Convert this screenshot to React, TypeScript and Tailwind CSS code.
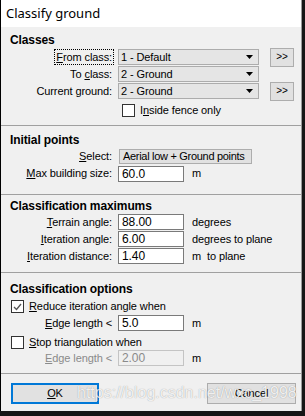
import React from "react";

function U({ children }: { children: React.ReactNode }) {
  return <span className="underline underline-offset-[1px]">{children}</span>;
}

function Arrow() {
  return (
    <svg width="7" height="4" viewBox="0 0 7 4" className="shrink-0">
      <path d="M0 0H7L3.5 4Z" fill="#000" />
    </svg>
  );
}

function Combo({ value }: { value: string }) {
  return (
    <div className="ml-[6px] flex h-[16px] w-[141px] items-center justify-between border border-[#acacac] bg-[#e5e5e5] pl-[2px] pr-[5px]">
      <span>{value}</span>
      <Arrow />
    </div>
  );
}

function MoreBtn() {
  return (
    <div className="ml-[11px] flex h-[19px] w-[24px] shrink-0 items-center justify-center border border-[#adadad] bg-[#e1e1e1] text-[10px]">
      &gt;&gt;
    </div>
  );
}

function Field({ value, disabled }: { value: string; disabled?: boolean }) {
  return (
    <div
      className={`flex h-[16px] w-[66px] items-center border pl-[3px] text-[12px] ${
        disabled ? "border-[#c4c4c4] bg-[#f0f0f0] text-[#8a8a8a]" : "border-[#7a7a7a] bg-white"
      }`}
    >
      {value}
    </div>
  );
}

function Check({ checked }: { checked?: boolean }) {
  return (
    <div className="flex h-[13px] w-[13px] shrink-0 items-center justify-center border border-[#333] bg-white">
      {checked && (
        <svg width="9" height="8" viewBox="0 0 9 8">
          <path d="M1 4L3.5 6.5L8 1" stroke="#555" strokeWidth="1.3" fill="none" />
        </svg>
      )}
    </div>
  );
}

function Label({ children, w = "w-[111px]" }: { children: React.ReactNode; w?: string }) {
  return <div className={`${w} shrink-0 whitespace-nowrap text-right`}>{children}</div>;
}

export default function App() {
  return (
    <div className="h-[416px] w-[305px] overflow-hidden bg-[#161616] font-['Liberation_Sans',Arial,sans-serif] text-[11px] leading-none tracking-[-0.1px] text-black">
      <div className="relative h-[411px] w-[302px] border-l border-r border-l-black border-r-[#9a9a9a] bg-[#f0f0f0]">
        <div className="flex h-[27px] items-center bg-white pl-[5px] font-['Noto_Sans',sans-serif] text-[13px] tracking-normal">
          Classify ground
        </div>

        {/* Classes */}
        <div className="pb-[8px] pt-[6px]">
          <div className="pl-[9px] text-[12px] font-bold leading-[14px]">Classes</div>
          <div className="mt-[2px] flex h-[16px] items-center">
            <Label>
              <span className="outline-1 outline-dotted outline-offset-1 outline-black">
                <U>F</U>rom class:
              </span>
            </Label>
            <Combo value="1 - Default" />
            <MoreBtn />
          </div>
          <div className="mt-[1px] flex h-[16px] items-center">
            <Label>
              To <U>c</U>lass:
            </Label>
            <Combo value="2 - Ground" />
          </div>
          <div className="mt-[1px] flex h-[16px] items-center">
            <Label>
              Current <U>g</U>round:
            </Label>
            <Combo value="2 - Ground" />
            <MoreBtn />
          </div>
          <div className="mt-[5px] flex h-[13px] items-center pl-[121px]">
            <Check />
            <span className="ml-[5px]">
              I<U>n</U>side fence only
            </span>
          </div>
        </div>
        <div className="border-t border-[#a0a0a0]" />

        {/* Initial points */}
        <div className="pb-[12px] pt-[7px]">
          <div className="pl-[9px] text-[12px] font-bold leading-[14px]">Initial points</div>
          <div className="mt-[2px] flex h-[15px] items-center">
            <Label>
              <U>S</U>elect:
            </Label>
            <div className="ml-[7px] flex h-[15px] w-[133px] items-center whitespace-nowrap border border-[#adadad] bg-[#e1e1e1] pl-[3px] tracking-[-0.3px]">
              Aerial low + Ground points
            </div>
          </div>
          <div className="mt-[1px] flex h-[17px] items-center">
            <Label>
              <U>M</U>ax building size:
            </Label>
            <div className="ml-[6px]">
              <Field value="60.0" />
            </div>
            <span className="ml-[8px]">m</span>
          </div>
        </div>
        <div className="border-t border-[#a0a0a0]" />

        {/* Classification maximums */}
        <div className="pb-[8px] pt-[4px]">
          <div className="pl-[9px] text-[12px] font-bold leading-[14px]">Classification maximums</div>
          <div className="mt-[1px] flex flex-col gap-[1px]">
            <div className="flex h-[16px] items-center">
              <Label>
                <U>T</U>errain angle:
              </Label>
              <div className="ml-[6px]">
                <Field value="88.00" />
              </div>
              <span className="ml-[8px]">degrees</span>
            </div>
            <div className="flex h-[16px] items-center">
              <Label>
                <U>I</U>teration angle:
              </Label>
              <div className="ml-[6px]">
                <Field value="6.00" />
              </div>
              <span className="ml-[8px]">degrees to plane</span>
            </div>
            <div className="flex h-[16px] items-center">
              <Label>
                <U>I</U>teration distance:
              </Label>
              <div className="ml-[6px]">
                <Field value="1.40" />
              </div>
              <span className="ml-[8px] whitespace-pre">m  to plane</span>
            </div>
          </div>
        </div>
        <div className="border-t border-[#a0a0a0]" />

        {/* Classification options */}
        <div className="pb-[7px] pt-[9px]">
          <div className="pl-[9px] text-[12px] font-bold leading-[14px]">Classification options</div>
          <div className="mt-[4px] flex h-[13px] items-center pl-[10px]">
            <Check checked />
            <span className="ml-[5px]">
              <U>R</U>educe iteration angle when
            </span>
          </div>
          <div className="mt-[2px] flex h-[16px] items-center">
            <Label>
              <U>E</U>dge length &lt;
            </Label>
            <div className="ml-[6px]">
              <Field value="5.0" />
            </div>
            <span className="ml-[8px]">m</span>
          </div>
          <div className="mt-[5px] flex h-[13px] items-center pl-[10px]">
            <Check />
            <span className="ml-[5px]">
              <U>S</U>top triangulation when
            </span>
          </div>
          <div className="mt-[1px] flex h-[16px] items-center">
            <Label>
              <span className="text-[#8a8a8a]">
                <U>E</U>dge length &lt;
              </span>
            </Label>
            <div className="ml-[6px]">
              <Field value="2.00" disabled />
            </div>
            <span className="ml-[8px]">m</span>
          </div>
        </div>
        <div className="border-t border-[#a0a0a0]" />

        <div className="flex items-center justify-between pl-[10px] pr-[5px] pt-[9px]">
          <div className="flex h-[21px] w-[88px] items-center justify-center border-2 border-[#0078d7] bg-[#e1e1e1]">
            <span>
              <U>O</U>K
            </span>
          </div>
          <div className="flex h-[21px] w-[89px] items-center justify-center border border-[#adadad] bg-[#e1e1e1]">
            Cancel
          </div>
        </div>

        <div className="pointer-events-none absolute left-[76px] top-[385px] text-[16px] leading-none tracking-normal text-white/85 [text-shadow:0_0_1px_rgba(0,0,0,0.4)]">
          https://blog.csdn.net/wxc_1998
        </div>
      </div>
    </div>
  );
}
